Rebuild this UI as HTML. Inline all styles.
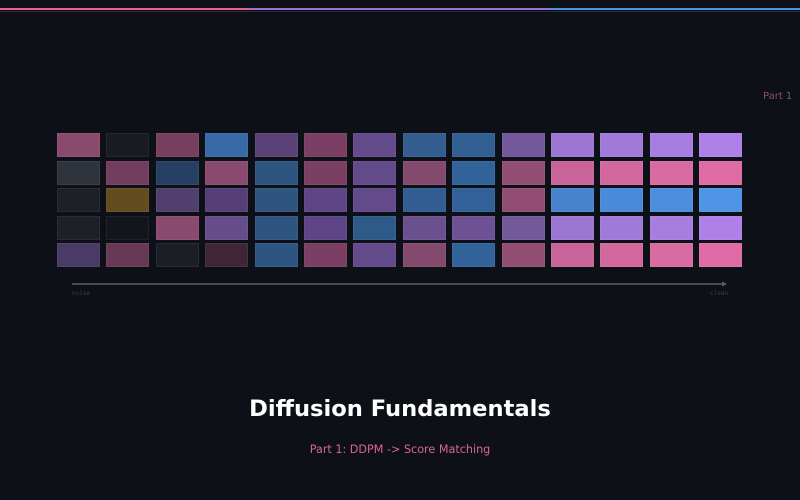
<!DOCTYPE html>
<html><head><meta charset="utf-8"><style>
body{margin:0;width:800px;height:500px;background:#0d1017;position:relative;overflow:hidden;font-family:"DejaVu Sans","Liberation Sans",sans-serif}
.bar{position:absolute;top:8px;height:2px}
.dim{position:absolute;top:11px;height:1px}
.c{position:absolute;width:43px;height:24px;box-shadow:inset 0 0 0 1px rgba(255,255,255,0.06)}
.t{position:absolute;white-space:nowrap}
</style></head><body>
<div class="bar" style="left:0;width:250px;background:#e0608e"></div>
<div class="bar" style="left:250px;width:300px;background:#9a72d0"></div>
<div class="bar" style="left:550px;width:250px;background:#4a90e0"></div>
<div class="dim" style="left:0;width:250px;background:#3a2030"></div>
<div class="dim" style="left:250px;width:300px;background:#2c2440"></div>
<div class="dim" style="left:550px;width:250px;background:#1e3048"></div>
<div class="t" style="left:763px;top:91px;font-size:10px;color:#8a4e78">Part 1</div>
<div id="g"></div>
<svg style="position:absolute;left:0;top:0" width="800" height="500">
<line x1="72" y1="284" x2="723" y2="284" stroke="#5a606a" stroke-width="1.5"/>
<path d="M722 281.5 L727 284 L722 286.5Z" fill="#5a606a"/>
</svg>
<div class="t" style="left:72px;top:290px;font-size:6px;color:#3a3e46;font-family:'DejaVu Sans Mono',monospace">noise</div>
<div class="t" style="left:710px;top:290px;font-size:6px;color:#3a3e46;font-family:'DejaVu Sans Mono',monospace">clean</div>
<div class="t" style="left:0;width:800px;text-align:center;top:396px;font-size:22.6px;font-weight:bold;color:#fff">Diffusion Fundamentals</div>
<div class="t" style="left:0;width:800px;text-align:center;top:443px;font-size:11.2px;color:#d8649e">Part 1: DDPM -&gt; Score Matching</div>
<script>
var rows=[
["#8a4a6e","#181b22","#763f5f","#3a6aa6","#5a4279","#7a3f62","#634a8a","#325d8e","#325f92","#73589a","#9b76d2","#a07ad8","#a77ee0","#ae80e8"],
["#2f333b","#733e5e","#263f62","#8a4a6e","#2e5480","#7a3f62","#634a8a","#834a6e","#31629a","#924e72","#c9649a","#d2689e","#d86ca2","#df6ca6"],
["#1e2028","#634c1f","#51406e","#563f77","#2e5480","#5e4585","#634a8a","#315d92","#32619a","#924d72","#4683cc","#4a8bd9","#4c8edc","#4e95e5"],
["#1e2028","#13161c","#8a4a6e","#654d8c","#2e5480","#5e4585","#2e5a8a","#6a508f","#6e5195","#73589a","#9b76d2","#a07ad8","#a77ee0","#ae80e8"],
["#4a3a66","#673957","#1b1e25","#3f2536","#2e5480","#7a3f62","#634a8a","#834a6e","#31629a","#924e72","#c9649a","#d2689e","#d86ca2","#df6ca6"]];
var h="";
for(var r=0;r<5;r++)for(var c=0;c<14;c++){
h+='<div class="c" style="left:'+Math.round(57+c*49.4)+'px;top:'+Math.round(133+r*27.5)+'px;background:'+rows[r][c]+'"></div>';}
document.getElementById("g").innerHTML=h;
</script>
</body></html>
